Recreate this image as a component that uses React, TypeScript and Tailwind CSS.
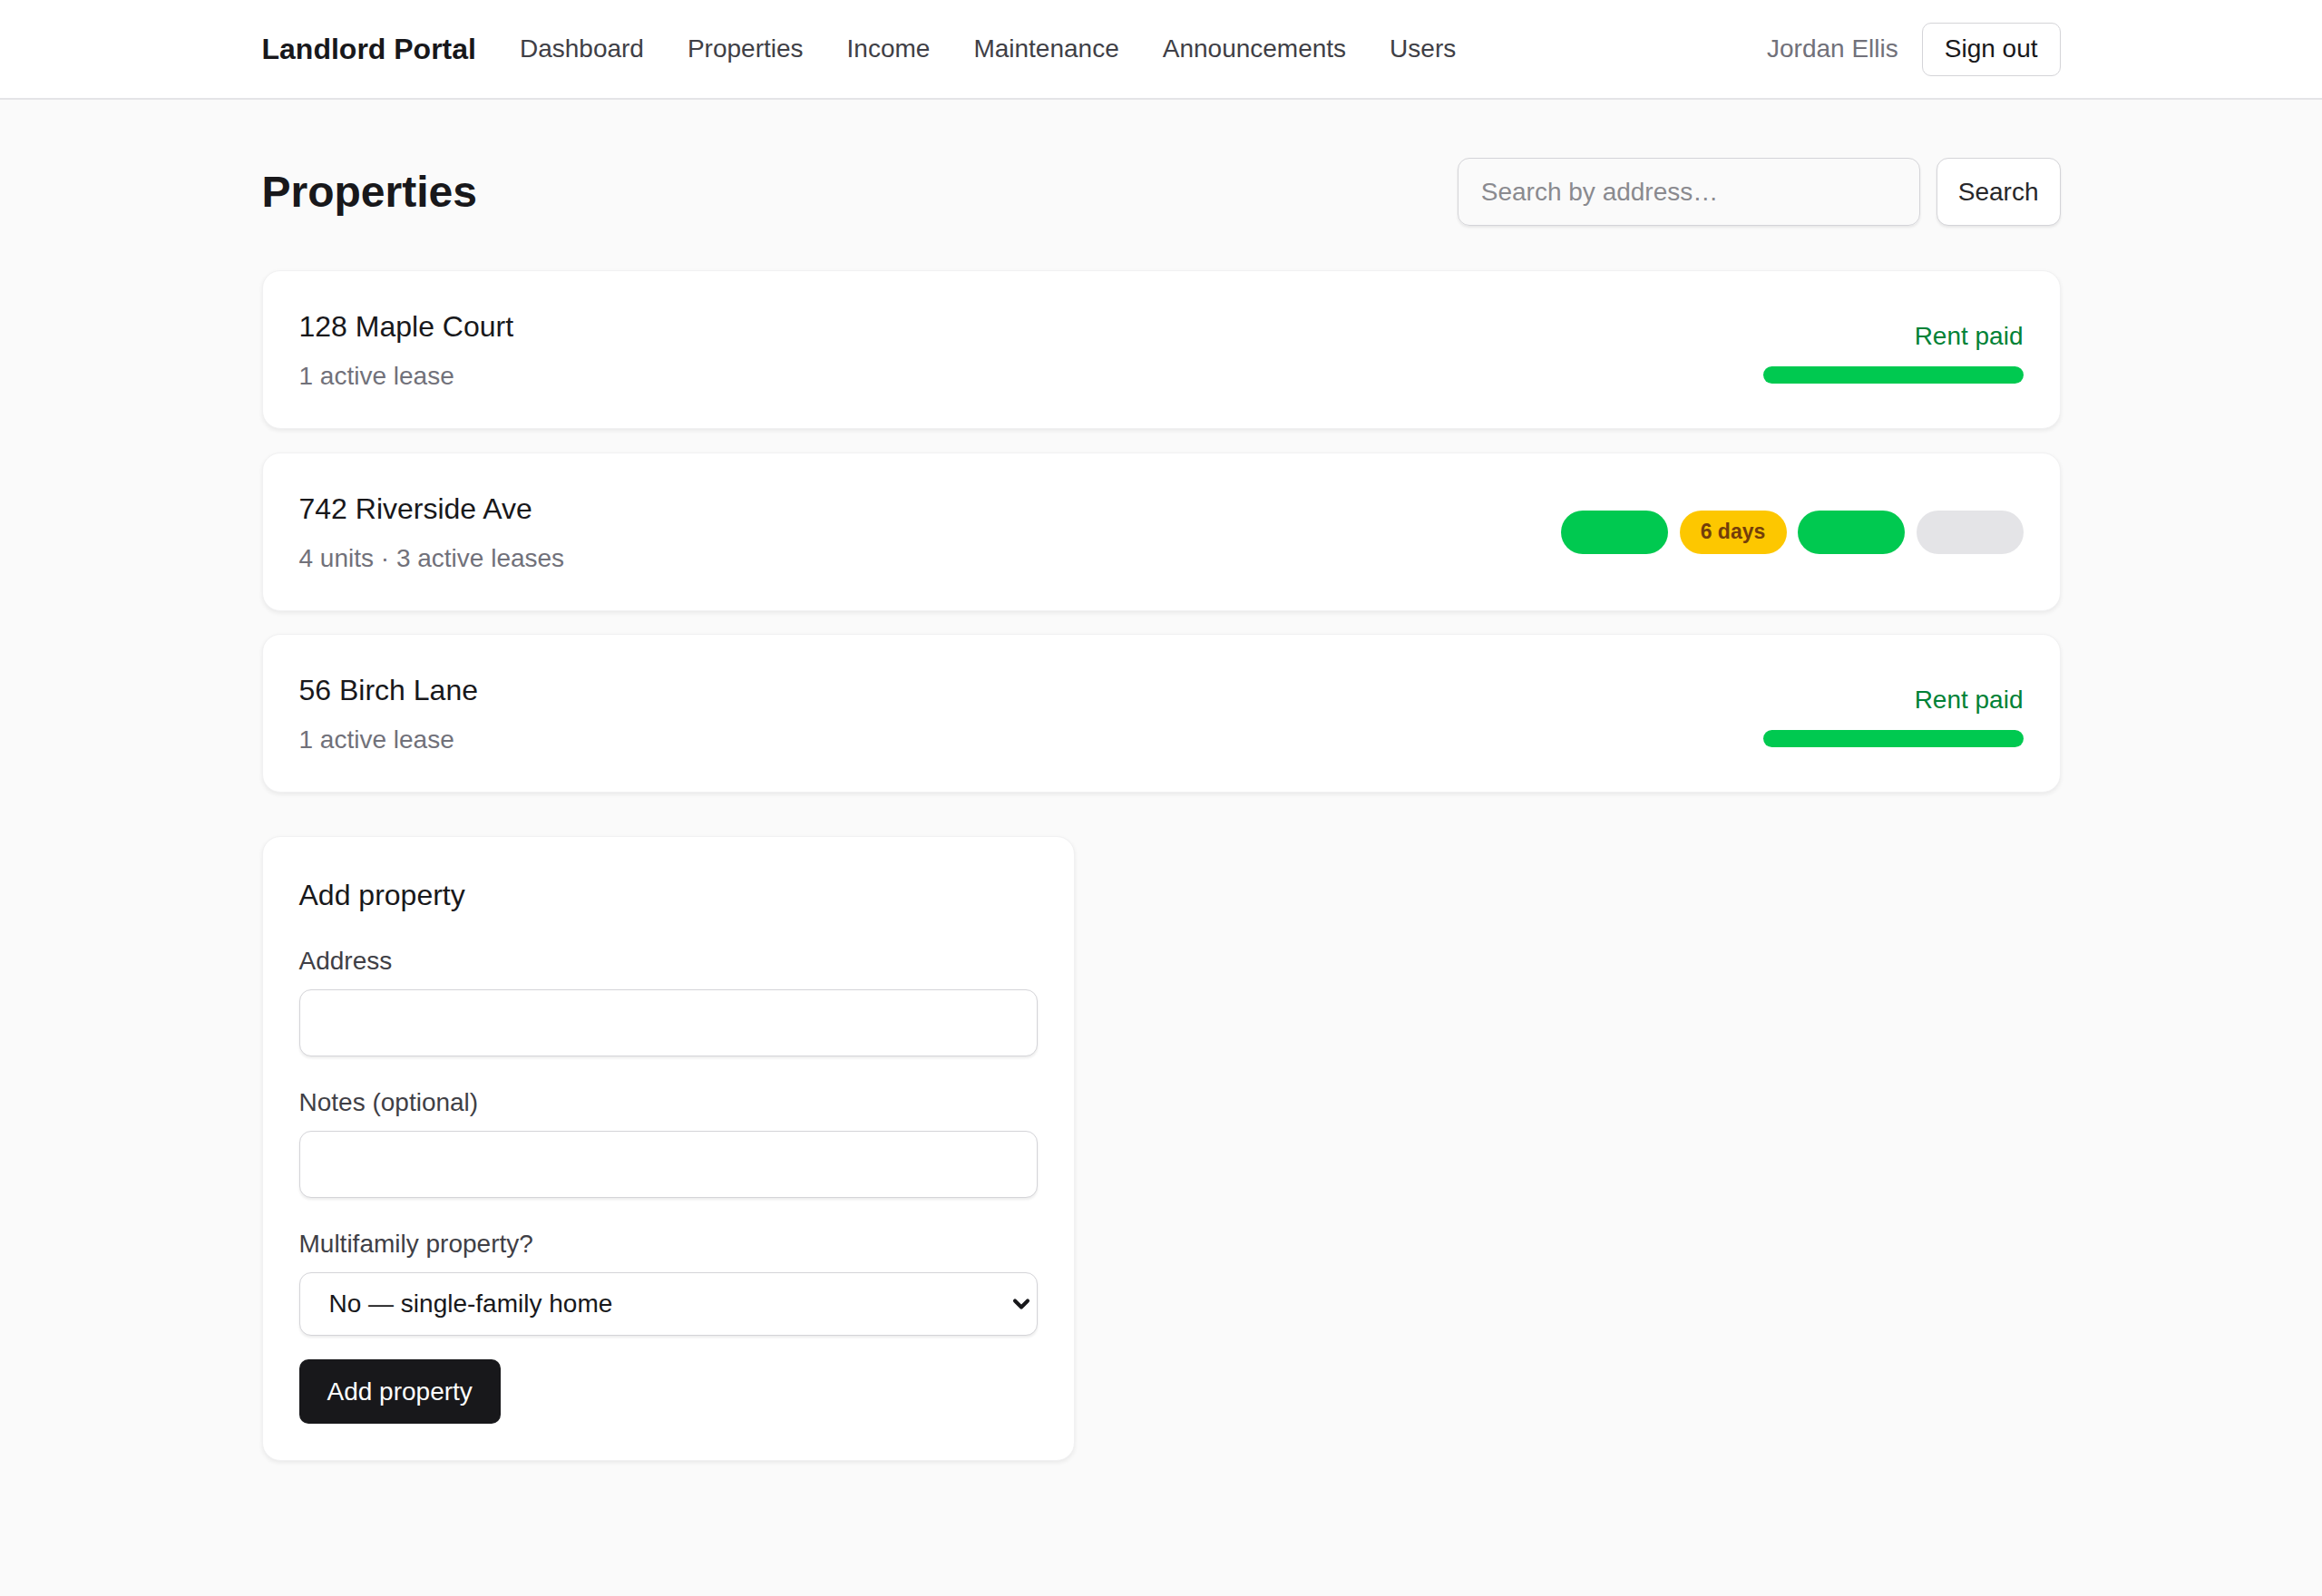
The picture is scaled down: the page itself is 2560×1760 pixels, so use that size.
import { ChevronDown } from "lucide-react";

interface Property {
  address: string;
  detail: string;
  status: "paid" | "units";
}

const navLinks = ["Dashboard", "Properties", "Income", "Maintenance", "Announcements", "Users"];

const properties: Property[] = [
  { address: "128 Maple Court", detail: "1 active lease", status: "paid" },
  { address: "742 Riverside Ave", detail: "4 units · 3 active leases", status: "units" },
  { address: "56 Birch Lane", detail: "1 active lease", status: "paid" },
];

const unitPills = [
  { label: "", cls: "bg-[#00c950]" },
  { label: "6 days", cls: "bg-[#fdc700] text-[#733e0a]" },
  { label: "", cls: "bg-[#00c950]" },
  { label: "", cls: "bg-[#e4e4e7]" },
];

function PropertyCard({ property }: { property: Property }) {
  return (
    <div className="flex items-center justify-between bg-white rounded-[20px] border-[1.5px] border-[#f1f1f2] shadow-[0_2px_5px_rgba(0,0,0,0.07)] px-[40px] pt-[37px] pb-[36px]">
      <div>
        <p className="text-[32px] leading-[48px] text-[#18181b]">{property.address}</p>
        <p className="mt-[10px] text-[28px] leading-[42px] text-[#71717a]">{property.detail}</p>
      </div>
      {property.status === "paid" ? (
        <div className="flex flex-col items-end gap-[12px]">
          <span className="text-[28px] leading-[42px] text-[#008236]">Rent paid</span>
          <div className="w-[287px] h-[19px] rounded-full bg-[#00c950]" />
        </div>
      ) : (
        <div className="flex items-center gap-[12.5px]">
          {unitPills.map((pill, i) => (
            <div
              key={i}
              className={`w-[118px] h-[48px] rounded-full flex items-center justify-center text-[23px] font-bold ${pill.cls}`}
            >
              {pill.label}
            </div>
          ))}
        </div>
      )}
    </div>
  );
}

function Field({ label, children }: { label: string; children: React.ReactNode }) {
  return (
    <div>
      <label className="block text-[28px] leading-[42px] text-[#3f3f46]">{label}</label>
      <div className="mt-[10px]">{children}</div>
    </div>
  );
}

export default function App() {
  return (
    <div className="min-h-screen bg-[#fafafa] font-['Liberation_Sans',Arial,sans-serif] text-[#18181b]">
      {/* Top bar */}
      <header className="bg-white border-b-2 border-[#e4e4e7]">
        <div className="w-[1983px] mx-auto h-[108px] flex items-center justify-between">
          <div className="flex items-center gap-[48px]">
            <span className="text-[32px] font-bold text-[#18181b]">Landlord Portal</span>
            {navLinks.map((link) => (
              <a key={link} className="text-[28px] text-[#3f3f46]">
                {link}
              </a>
            ))}
          </div>
          <div className="flex items-center gap-[26px]">
            <span className="text-[28px] text-[#71717a]">Jordan Ellis</span>
            <button className="h-[59px] px-[24px] rounded-[10px] border-[1.5px] border-[#d4d4d8] bg-white text-[28px] text-[#18181b]">
              Sign out
            </button>
          </div>
        </div>
      </header>

      <main className="w-[1983px] mx-auto pt-[64px] pb-[150px]">
        <div className="flex items-center justify-between h-[75px]">
          <h1 className="text-[48px] font-bold text-[#18181b]">Properties</h1>
          <div className="flex items-center gap-[18px]">
            <input
              placeholder="Search by address…"
              className="w-[510px] h-[75px] px-[25px] rounded-[13px] border-[1.5px] border-[#d4d4d8] bg-transparent shadow-[0_2px_3px_rgba(0,0,0,0.08)] text-[28px] placeholder:text-[#8a8a8f] outline-none"
            />
            <button className="h-[75px] px-[23px] rounded-[13px] border-[1.5px] border-[#d4d4d8] bg-white shadow-[0_2px_3px_rgba(0,0,0,0.08)] text-[28px] text-[#27272a]">
              Search
            </button>
          </div>
        </div>

        <div className="mt-[49px] flex flex-col gap-[25.6px]">
          {properties.map((p) => (
            <PropertyCard key={p.address} property={p} />
          ))}
        </div>

        {/* Add property form */}
        <div className="mt-[48px] w-[896px] bg-white rounded-[20px] border-[1.5px] border-[#f1f1f2] shadow-[0_2px_5px_rgba(0,0,0,0.07)] p-[40px]">
          <h2 className="text-[32px] leading-[48px] text-[#18181b]">Add property</h2>
          <div className="mt-[28px] flex flex-col gap-[30px]">
            <Field label="Address">
              <input className="w-full h-[74px] px-[25px] rounded-[13px] border-[1.5px] border-[#d4d4d8] bg-white shadow-[0_2px_3px_rgba(0,0,0,0.08)] text-[28px] outline-none" />
            </Field>
            <Field label="Notes (optional)">
              <input className="w-full h-[74px] px-[25px] rounded-[13px] border-[1.5px] border-[#d4d4d8] bg-white shadow-[0_2px_3px_rgba(0,0,0,0.08)] text-[28px] outline-none" />
            </Field>
            <div>
              <label className="block text-[28px] leading-[42px] text-[#3f3f46]">Multifamily property?</label>
              <div className="relative mt-[10px]">
                <select className="appearance-none w-full h-[70px] pl-[32px] pr-[60px] rounded-[13px] border-[1.5px] border-[#d4d4d8] bg-white shadow-[0_2px_3px_rgba(0,0,0,0.08)] text-[28px] text-[#18181b] outline-none">
                  <option>No — single-family home</option>
                  <option>Yes — multiple units</option>
                </select>
                <ChevronDown
                  className="absolute right-[4px] top-1/2 -translate-y-1/2 w-[28px] h-[28px] text-[#18181b] pointer-events-none"
                  strokeWidth={3.5}
                />
              </div>
            </div>
          </div>
          <button className="mt-[26px] h-[71px] px-[31px] rounded-[10px] bg-[#18181b] text-white text-[28px]">
            Add property
          </button>
        </div>
      </main>
    </div>
  );
}
